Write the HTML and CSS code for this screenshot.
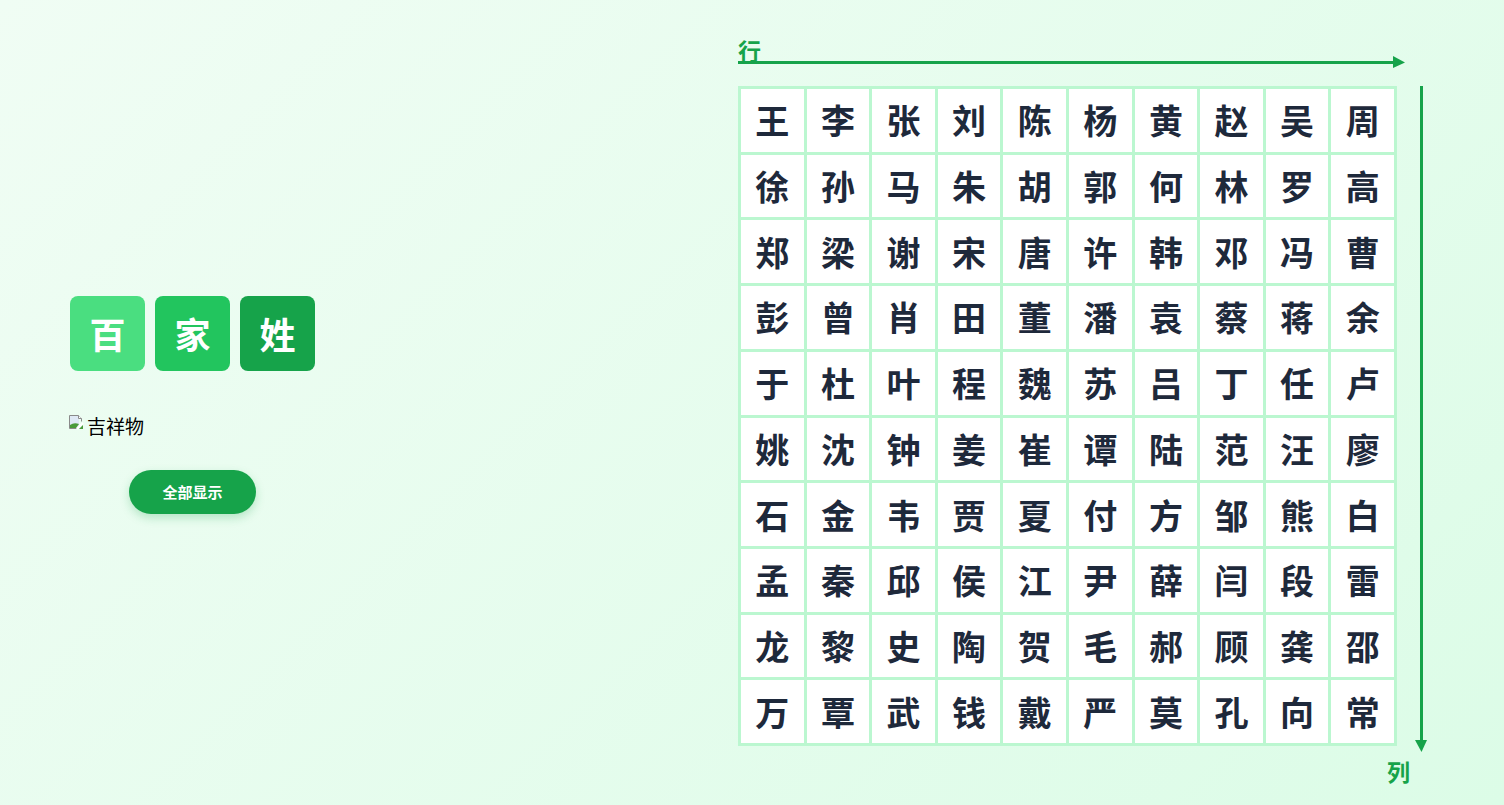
FILE: index.html
```html
<!DOCTYPE html>
<html lang="zh-CN">
<head>
<meta charset="utf-8">
<title>百家姓</title>
<link rel="stylesheet" href="styles.css">
</head>
<body>
<div class="page">
  <section class="left">
    <div class="title">
      <div class="tile t1">百</div>
      <div class="tile t2">家</div>
      <div class="tile t3">姓</div>
    </div>
    <div class="mascot">
      <svg class="broken" width="16" height="16" viewBox="0 0 16 16">
        <path d="M1.5 1.5h9l3 3v3" fill="none" stroke="#8a8a8a"/>
        <path d="M1.5 1.5v13h7" fill="none" stroke="#8a8a8a"/>
        <rect x="2" y="2" width="9" height="12" fill="#dfe9f5"/>
        <path d="M2 14 L2 11 Q6 8 11 10 L8 14 Z" fill="#4a9a3a"/>
        <path d="M10.5 1.5v3h3" fill="#fff" stroke="#8a8a8a"/>
        <path d="M9 15 L15 9" stroke="#ffffff" stroke-width="2"/>
        <path d="M11 15 L15 11 L15 15 Z" fill="#4a9a3a"/>
      </svg><span class="alt">吉祥物</span>
    </div>
    <button class="btn">全部显示</button>
  </section>

  <section class="right">
    <div class="row-label">行</div>
    <svg class="h-arrow" width="667" height="12" viewBox="0 0 667 12">
      <rect x="0" y="5" width="656" height="3" fill="#16a34a"/>
      <path d="M655 0 L667 6.5 L655 12 Z" fill="#16a34a"/>
    </svg>
    <div class="board">
      <div class="grid">
        <div class="cell">王</div><div class="cell">李</div><div class="cell">张</div><div class="cell">刘</div><div class="cell">陈</div><div class="cell">杨</div><div class="cell">黄</div><div class="cell">赵</div><div class="cell">吴</div><div class="cell">周</div>
        <div class="cell">徐</div><div class="cell">孙</div><div class="cell">马</div><div class="cell">朱</div><div class="cell">胡</div><div class="cell">郭</div><div class="cell">何</div><div class="cell">林</div><div class="cell">罗</div><div class="cell">高</div>
        <div class="cell">郑</div><div class="cell">梁</div><div class="cell">谢</div><div class="cell">宋</div><div class="cell">唐</div><div class="cell">许</div><div class="cell">韩</div><div class="cell">邓</div><div class="cell">冯</div><div class="cell">曹</div>
        <div class="cell">彭</div><div class="cell">曾</div><div class="cell">肖</div><div class="cell">田</div><div class="cell">董</div><div class="cell">潘</div><div class="cell">袁</div><div class="cell">蔡</div><div class="cell">蒋</div><div class="cell">余</div>
        <div class="cell">于</div><div class="cell">杜</div><div class="cell">叶</div><div class="cell">程</div><div class="cell">魏</div><div class="cell">苏</div><div class="cell">吕</div><div class="cell">丁</div><div class="cell">任</div><div class="cell">卢</div>
        <div class="cell">姚</div><div class="cell">沈</div><div class="cell">钟</div><div class="cell">姜</div><div class="cell">崔</div><div class="cell">谭</div><div class="cell">陆</div><div class="cell">范</div><div class="cell">汪</div><div class="cell">廖</div>
        <div class="cell">石</div><div class="cell">金</div><div class="cell">韦</div><div class="cell">贾</div><div class="cell">夏</div><div class="cell">付</div><div class="cell">方</div><div class="cell">邹</div><div class="cell">熊</div><div class="cell">白</div>
        <div class="cell">孟</div><div class="cell">秦</div><div class="cell">邱</div><div class="cell">侯</div><div class="cell">江</div><div class="cell">尹</div><div class="cell">薛</div><div class="cell">闫</div><div class="cell">段</div><div class="cell">雷</div>
        <div class="cell">龙</div><div class="cell">黎</div><div class="cell">史</div><div class="cell">陶</div><div class="cell">贺</div><div class="cell">毛</div><div class="cell">郝</div><div class="cell">顾</div><div class="cell">龚</div><div class="cell">邵</div>
        <div class="cell">万</div><div class="cell">覃</div><div class="cell">武</div><div class="cell">钱</div><div class="cell">戴</div><div class="cell">严</div><div class="cell">莫</div><div class="cell">孔</div><div class="cell">向</div><div class="cell">常</div>
      </div>
      <svg class="v-arrow" width="12" height="666" viewBox="0 0 12 666">
        <rect x="5" y="0" width="3" height="656" fill="#16a34a"/>
        <path d="M0 654 L12 654 L6.5 666 Z" fill="#16a34a"/>
      </svg>
    </div>
    <div class="col-label-row"><span class="col-label">列</span></div>
  </section>
</div>
</body>
</html>
```

FILE: styles.css
```css
html, body {
  margin: 0;
  padding: 0;
}
body {
  width: 1504px;
  height: 805px;
  overflow: hidden;
  background: linear-gradient(135deg, #f0fdf4 0%, #dcfce7 100%);
  font-family: "Noto Sans CJK SC", "Noto Sans", sans-serif;
}
.page {
  display: flex;
  height: 805px;
  padding-left: 68px;
  box-sizing: border-box;
}
.left {
  width: 249px;
  align-self: center;
  display: flex;
  flex-direction: column;
  align-items: center;
  padding-top: 4px;
}
.title {
  display: flex;
  gap: 10px;
}
.tile {
  width: 75px;
  height: 75px;
  border-radius: 8px;
  color: #fff;
  font-size: 36px;
  font-weight: 700;
  display: flex;
  align-items: center;
  justify-content: center;
}
.t1 { background: #4ade80; }
.t2 { background: #22c55e; }
.t3 { background: #16a34a; }
.mascot {
  align-self: flex-start;
  margin-top: 41px;
  display: flex;
  align-items: center;
  height: 28px;
  font-size: 19px;
  color: #000;
}
.broken {
  display: block;
  margin-top: -8px;
  margin-right: 3px;
}
.btn {
  margin-top: 30px;
  width: 127px;
  height: 44px;
  border: none;
  border-radius: 22px;
  background: #16a34a;
  color: #fff;
  font-family: "Noto Sans CJK SC", sans-serif;
  font-size: 15px;
  font-weight: 700;
  box-shadow: 0 4px 10px rgba(22, 163, 74, 0.25);
}
.right {
  margin-left: 421px;
  padding-top: 37px;
  display: flex;
  flex-direction: column;
  width: 689px;
}
.row-label {
  color: #16a34a;
  font-size: 23px;
  font-weight: 700;
  line-height: 26px;
  height: 26px;
}
.h-arrow {
  display: block;
  margin-top: -7px;
  margin-bottom: 18px;
}
.board {
  display: flex;
  align-items: flex-start;
}
.grid {
  width: 659px;
  height: 660px;
  box-sizing: border-box;
  padding: 3px;
  background: #bbf7d0;
  display: grid;
  grid-template-columns: repeat(10, 1fr);
  grid-template-rows: repeat(10, 1fr);
  gap: 3px;
}
.cell {
  background: #fff;
  display: flex;
  align-items: center;
  justify-content: center;
  color: #1e293b;
  font-size: 34px;
  font-weight: 700;
  line-height: 1;
}
.v-arrow {
  display: block;
  margin-left: 18px;
}
.col-label-row {
  display: flex;
  justify-content: flex-end;
  padding-right: 17px;
  margin-top: 6px;
}
.col-label {
  color: #16a34a;
  font-size: 23px;
  font-weight: 700;
  line-height: 26px;
}
```
